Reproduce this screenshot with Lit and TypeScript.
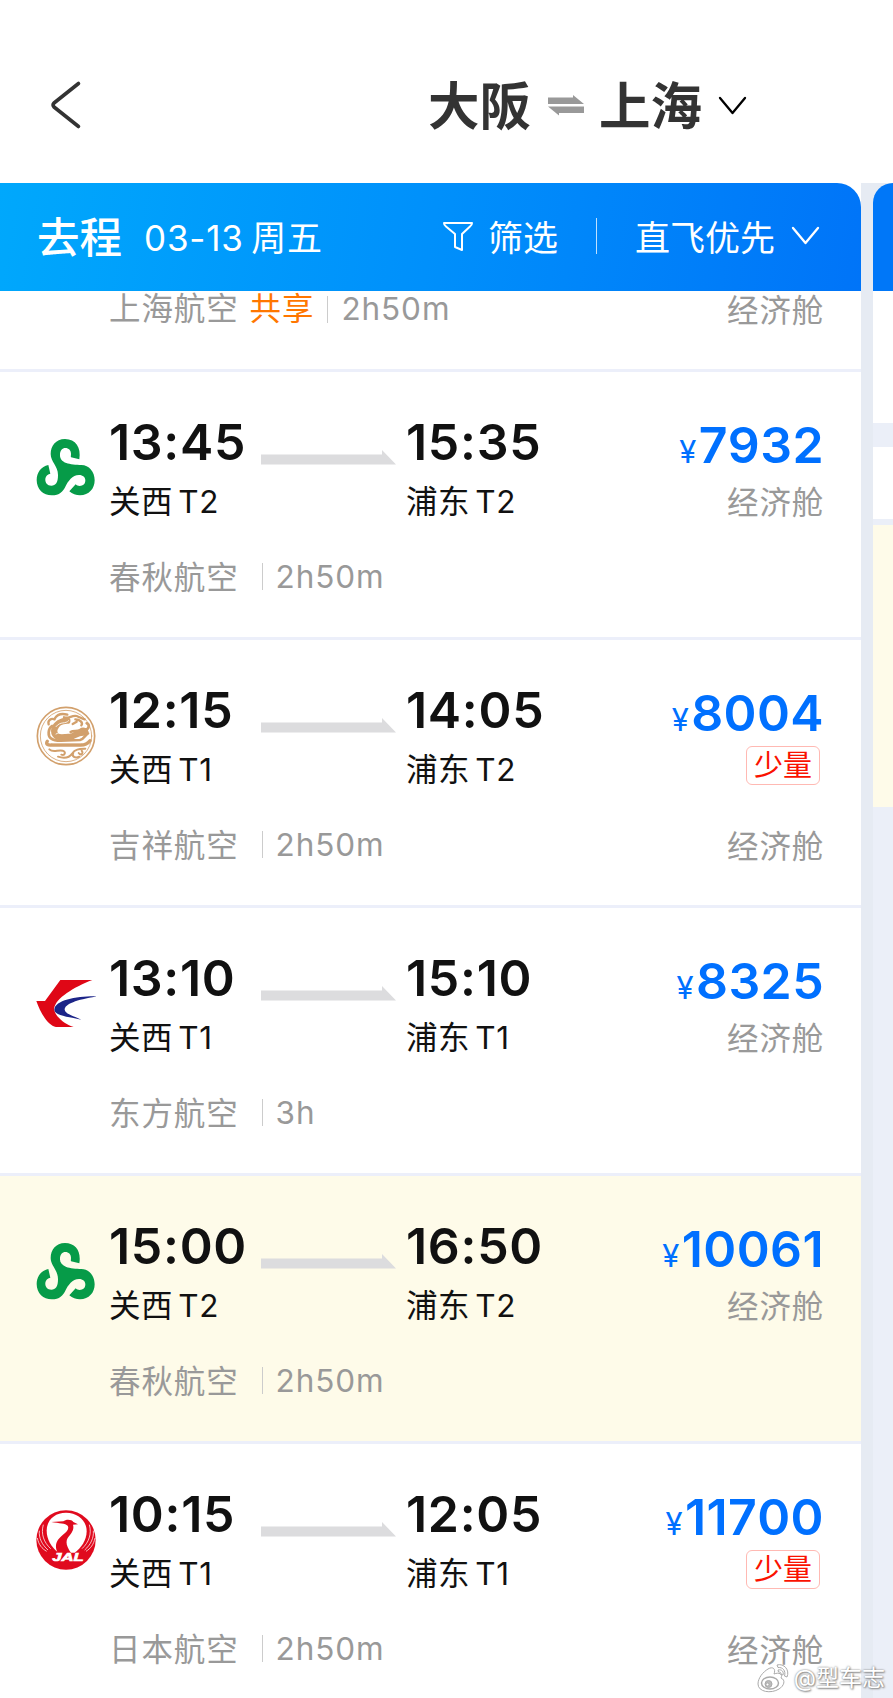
import {html, svg, css, LitElement, TemplateResult} from 'lit';
import {customElement, property} from 'lit/decorators.js';
import {classMap} from 'lit/directives/class-map.js';

interface Flight {
  logo: string;
  dep: string;
  depPort: string;
  arr: string;
  arrPort: string;
  price: string;
  airline: string;
  duration: string;
  few?: boolean;
  picked?: boolean;
}

const flights: Flight[] = [
  {logo: 'spring', dep: '13:45', depPort: '关西 T2', arr: '15:35', arrPort: '浦东 T2', price: '7932', airline: '春秋航空', duration: '2h50m'},
  {logo: 'juneyao', dep: '12:15', depPort: '关西 T1', arr: '14:05', arrPort: '浦东 T2', price: '8004', airline: '吉祥航空', duration: '2h50m', few: true},
  {logo: 'eastern', dep: '13:10', depPort: '关西 T1', arr: '15:10', arrPort: '浦东 T1', price: '8325', airline: '东方航空', duration: '3h'},
  {logo: 'spring', dep: '15:00', depPort: '关西 T2', arr: '16:50', arrPort: '浦东 T2', price: '10061', airline: '春秋航空', duration: '2h50m', picked: true},
  {logo: 'jal', dep: '10:15', depPort: '关西 T1', arr: '12:05', arrPort: '浦东 T1', price: '11700', airline: '日本航空', duration: '2h50m', few: true},
];

// every logo is drawn on the same 180x180 board
const logos: Record<string, TemplateResult> = {
  spring: svg`<path fill="#069b48" d="M130 64C136 28 119 3 87 3C59 3 44 24 44 48C44 71 66 84 66 111C66 134 59 143 46 143C34 143 27 134 28 123C29 113 37 108 43 107L37 81C15 86 2 104 2 126C2 154 22 172 47 172C71 172 81 160 88 146C96 130 109 111 129 111C141 111 148 118 148 127C148 138 141 144 131 144C126 144 122 142 119 139L100 160C109 168 120 172 132 172C159 172 176 152 176 127C176 101 159 81 136 81C121 81 101 79 91 75C78 70 71 61 72 50C72 38 79 30 88 30C98 30 105 37 105 47C105 52 104 56 105 58Z"/>`,
  juneyao: svg`
    <g fill="none" stroke="#d2a06c" stroke-linecap="round" stroke-linejoin="round">
      <circle cx="90" cy="90" r="86" stroke-width="5"/>
      <circle cx="90" cy="90" r="77" stroke-width="2.500"/>
      <path stroke-width="7" d="M38 55C34 42 46 36 56 40M56 38C64 24 80 22 94 26M84 34C98 40 108 26 122 30C132 34 138 38 146 40M118 40C132 40 142 50 136 58M122 47L110 54"/>
      <path stroke-width="19" d="M94 44C76 44 60 54 55 70C52 86 64 94 78 94L106 92C118 88 124 80 142 80"/>
      <path stroke-width="8" d="M48 60C36 68 34 90 46 98C54 104 64 104 74 104L132 102C146 98 146 88 156 82M104 78C112 72 124 78 132 72C144 64 158 74 152 84M146 72C160 70 162 56 152 52"/>
      <path stroke-width="10" d="M34 106C28 114 36 118 46 117L134 117C148 117 156 112 162 104"/>
      <path stroke-width="6" d="M40 130C52 142 66 130 80 134C92 138 86 150 76 146M66 152C90 160 102 152 109 142C117 129 130 129 148 128M112 140C106 152 117 158 130 152M137 134C144 144 134 149 128 141"/>
    </g>
    <path fill="none" stroke="#fff" stroke-width="2.500" stroke-linecap="round" d="M60 62C74 44 88 56 98 44M60 84C72 76 80 86 94 80M50 110H134C146 108 150 104 156 98M72 66C80 58 84 68 90 60"/>`,
  eastern: svg`
    <path fill="#df0716" d="M1 81H27L73 18H169C115 39 58 72 54 105C58 129 87 151 113 159H60C34 154 12 113 1 81Z"/>
    <path fill="#1c2488" d="M181 67C123 66 57 78 55 107C56 125 98 128 136 137C113 125 89 121 86 107C86 89 123 77 181 67Z"/>`,
  jal: svg`
    <circle cx="90" cy="90" r="89" fill="#e00a1e"/>
    <path fill="#fff" d="M90 8C126 8 152 32 152 64C152 90 136 114 116 128H68C46 112 32 88 32 62C32 30 56 8 90 8Z"/>
    <path fill="#e00a1e" d="M46 36L82 34C90 26 108 28 112 36L126 43L111 44C116 60 104 72 95 84C88 96 92 110 106 130H66C52 106 64 88 80 75C94 64 100 56 95 47C88 40 70 40 46 36Z"/>
    <path fill="none" stroke="#fff" stroke-width="2.200" d="M22 44C14 72 24 98 44 116M10 62C8 84 18 104 36 120M4 84C8 104 18 116 32 124M160 44C168 72 158 98 138 116M172 62C174 84 164 104 146 120M177 84C173 104 163 116 150 124"/>
    <text x="49" y="154" class="jal" textLength="94" lengthAdjust="spacingAndGlyphs">JAL</text>`,
};

@customElement('flight-row')
export class FlightRow extends LitElement {
  @property({attribute: false}) flight!: Flight;

  static styles = css`
  :host {
    display: block;
  }
  * {
    box-sizing: border-box;
  }

  .row {
    height: 268px;
    padding: 42px 37px 0 36px;
    display: grid;
    grid-template-columns: 73px 152px 145px 1fr auto;
    grid-template-rows: 57px 60px 90px;
    border-bottom: 3px solid #eceffa;
    background: #fff;
    color: #111;
  }

  .picked {
    background: #fefbe9;
  }

  .logo {
    grid-row: 1 / 3;
    width: 60px;
    height: 60px;
    margin-top: 24px;
  }

  .jal {
    font: italic 700 34px "Liberation Sans", sans-serif;
    fill: #fff;
    stroke: #fff;
    stroke-width: 2px;
  }

  .time {
    font-size: 50px;
    font-weight: 600;
    font-kerning: none;
    letter-spacing: .7px;
    line-height: 56px;
    white-space: nowrap;
  }

  .port {
    margin-top: 2px;
    font-size: 31.5px;
    line-height: 60px;
    letter-spacing: .5px;
    word-spacing: -4px;
    white-space: nowrap;
  }

  .arrow {
    width: 135px;
    height: 15px;
    margin-top: 36px;
  }

  .middle {
    grid-row: 1 / 3;
    grid-column: 3;
  }

  .dep, .arr {
    grid-row: 1 / 3;
  }

  .arr {
    grid-column: 4;
  }

  .fare {
    grid-column: 5;
    grid-row: 1 / 4;
    display: flex;
    flex-direction: column;
    align-items: flex-end;
  }

  .price {
    color: #0070ff;
    font-size: 50px;
    font-weight: 600;
    font-kerning: none;
    letter-spacing: .4px;
    line-height: 62px;
    white-space: nowrap;
  }

  .yen {
    font-size: 31px;
    font-weight: 400;
    margin-right: 2px;
  }

  .cabin {
    margin-top: -5px;
    font-size: 31.5px;
    letter-spacing: .8px;
    line-height: 50px;
    color: #999;
    white-space: nowrap;
  }

  .few {
    width: 74px;
    height: 39px;
    margin: -5px 4px 42px 0;
    border: 1px solid #ffb9b3;
    border-radius: 6px;
    color: #fa1200;
    font-size: 29px;
    line-height: 37px;
    text-align: center;
  }

  .meta {
    grid-column: 2 / 5;
    grid-row: 3;
    display: flex;
    align-items: center;
    height: 90px;
    color: #999;
    font-size: 31.5px;
    letter-spacing: .9px;
  }

  .airline {
    margin-bottom: 3px;
  }

  .rule {
    width: 1px;
    height: 27px;
    margin: 0 13px 0 23px;
    background: #ccc;
  }
  `;

  render() {
    const f = this.flight;
    return html`
    <div class=${classMap({row: true, picked: !!f.picked})}>
      <svg class="logo" viewBox="0 0 180 180">${logos[f.logo]}</svg>
      <div class="dep">
        <div class="time">${f.dep}</div>
        <div class="port">${f.depPort}</div>
      </div>
      <div class="middle">
        <svg class="arrow" viewBox="0 0 135 15"><path fill="#dcdcde" d="M0 4.5H121V0L135 14.5H0Z"/></svg>
      </div>
      <div class="arr">
        <div class="time">${f.arr}</div>
        <div class="port">${f.arrPort}</div>
      </div>
      <div class="fare">
        <div class="price"><span class="yen">¥</span>${f.price}</div>
        ${f.few ? html`<div class="few">少量</div>` : ''}
        <div class="cabin">经济舱</div>
      </div>
      <div class="meta"><span class="airline">${f.airline}</span><i class="rule"></i><span>${f.duration}</span></div>
    </div>
    `;
  }
}

@customElement('app-root')
export class AppRoot extends LitElement {
  static styles = css`
  :host {
    display: flex;
    flex-direction: column;
    position: relative;
    width: 893px;
    height: 1698px;
    overflow: hidden;
    background: #fff;
    font-family: Inter, "Noto Sans CJK SC", sans-serif;
  }
  * {
    box-sizing: border-box;
  }

  .top {
    height: 183px;
    flex: none;
    display: flex;
    align-items: center;
    padding: 28px 0 0 49px;
    color: #333;
  }

  .back {
    width: 33px;
    height: 50px;
    margin: 0 346px 2px 0;
  }

  .city {
    font-size: 51.5px;
    font-weight: 600;
    line-height: 60px;
  }

  .swap {
    width: 36px;
    height: 21px;
    margin: 0 15px 0 17px;
  }

  .down {
    width: 29px;
    height: 19px;
    margin-left: 16px;
  }

  .columns {
    flex: 1;
    display: flex;
    gap: 12px;
    min-height: 0;
    background: #e6ebf3;
  }

  .trip {
    width: 861px;
    flex: none;
  }

  .bar {
    height: 108px;
    display: flex;
    align-items: center;
    padding: 0 41px 3px 37px;
    border-radius: 0 24px 0 0;
    background: linear-gradient(100deg, #00a8fc 0%, #0090fb 50%, #0074f8 100%);
    color: #fff;
    font-size: 35px;
    white-space: nowrap;
  }

  /* keeps the corner of the bar white instead of the gap colour */
  .corner {
    background: #fff;
  }

  .leg {
    margin-bottom: 3px;
    font-size: 42.5px;
    font-weight: 500;
  }

  .date {
    margin-left: 22px;
    letter-spacing: .8px;
    word-spacing: -3px;
  }

  .funnel {
    width: 32px;
    height: 32px;
    margin-right: 14px;
  }

  .filter {
    display: flex;
    align-items: center;
    margin-left: auto;
  }

  .split {
    width: 1px;
    height: 36px;
    margin: 0 38px;
    background: rgba(255,255,255,.75);
  }

  .tail {
    height: 81px;
    display: flex;
    justify-content: space-between;
    padding: 0 37px 0 109px;
    border-bottom: 3px solid #eceffa;
    background: #fff;
    color: #999;
    font-size: 31.5px;
    letter-spacing: .9px;
    line-height: 36px;
  }

  .tail .left {
    display: flex;
    align-items: center;
    height: 36px;
  }

  .tail .cabin {
    padding-top: 2px;
    letter-spacing: .8px;
  }

  .share {
    margin-left: 11px;
    color: #ff7700;
  }

  .rule {
    width: 1px;
    height: 27px;
    margin: 0 13px 0 13px;
    background: #ccc;
  }

  .next {
    width: 20px;
    background: #ebeff8;
  }

  .next .head {
    height: 108px;
    border-radius: 24px 0 0 0;
    background: #0077f8;
  }

  .headwrap {
    background: #e6ebf3;
  }

  .card {
    height: 132px;
    background: #fff;
  }

  .card.small {
    height: 72px;
    margin-top: 24px;
  }

  .card.yellow {
    height: 282px;
    margin-top: 6px;
    background: #fefbe9;
  }

  .mark {
    position: absolute;
    right: 8px;
    bottom: 4px;
    display: flex;
    align-items: center;
    gap: 4px;
    color: #fff;
    font-size: 23px;
    line-height: 32px;
    text-shadow: 0 0 2px #777, 1px 1px 2px #888;
  }

  .weibo {
    width: 34px;
    height: 30px;
  }
  `;

  chevron(color: string): TemplateResult {
    return html`<svg class="down" viewBox="0 0 29 19" fill="none" stroke=${color} stroke-width="2.3" stroke-linecap="round" stroke-linejoin="round"><path d="M2 2L14.5 17L27 2"/></svg>`;
  }

  render() {
    return html`
    <header class="top">
      <svg class="back" viewBox="0 0 33 50" fill="none" stroke="#333" stroke-width="3.6" stroke-linecap="round" stroke-linejoin="round"><path d="M29.5 3.5L5 23Q3.2 25 5 27L29.5 46.5"/></svg>
      <span class="city">大阪</span>
      <svg class="swap" viewBox="0 0 36 21" fill="#999"><path d="M0 2.5H25V0L36 9H0Z"/><path d="M0 11.5H36V18H11V20.5Z"/></svg>
      <span class="city">上海</span>
      ${this.chevron('#000')}
    </header>

    <main class="columns">
      <section class="trip">
        <div class="corner">
          <div class="bar">
            <span class="leg">去程</span>
            <span class="date">03-13 周五</span>
            <span class="filter">
              <svg class="funnel" viewBox="0 0 32 32" fill="none" stroke="#fff" stroke-width="2" stroke-linejoin="round"><path d="M2 3H30Q30 5 28 6.500L20 14V30L13 27V14L4 6.500Q2 5 2 3Z"/></svg>
              筛选
            </span>
            <i class="split"></i>
            <span>直飞优先</span>
            ${this.chevron('#fff')}
          </div>
        </div>
        <div class="tail">
          <div class="left"><span>上海航空</span><span class="share">共享</span><i class="rule"></i><span>2h50m</span></div>
          <span class="cabin">经济舱</span>
        </div>
        ${flights.map((flight) => html`<flight-row .flight=${flight}></flight-row>`)}
      </section>

      <section class="next">
        <div class="headwrap"><div class="head"></div></div>
        <div class="card"></div>
        <div class="card small"></div>
        <div class="card yellow"></div>
      </section>
    </main>

    <div class="mark">
      <svg class="weibo" viewBox="0 0 34 30" fill="#fff" stroke="#aaa" stroke-width="1">
        <path d="M12 6C17 3 20 6 18 11C23 9 27 11 25 15C30 17 28 23 23 26C15 31 2 29 2 21C2 15 7 9 12 6Z"/>
        <ellipse cx="14" cy="20" rx="8.500" ry="6" stroke-width="1.500"/>
        <circle cx="12.500" cy="21" r="3.500" fill="#bbb"/>
        <circle cx="11.500" cy="21.500" r="1.500"/>
        <path d="M21 2C28 0 34 7 31 14L28.500 13C30 8 27 4 22 4.500ZM22 7C26 6 28 9 27 12L25 11.500C25.500 9.500 24 9 22.500 9Z"/>
      </svg>
      <span>@型车志</span>
    </div>
    `;
  }
}

declare global {
  interface HTMLElementTagNameMap {
    'app-root': AppRoot;
    'flight-row': FlightRow;
  }
}
